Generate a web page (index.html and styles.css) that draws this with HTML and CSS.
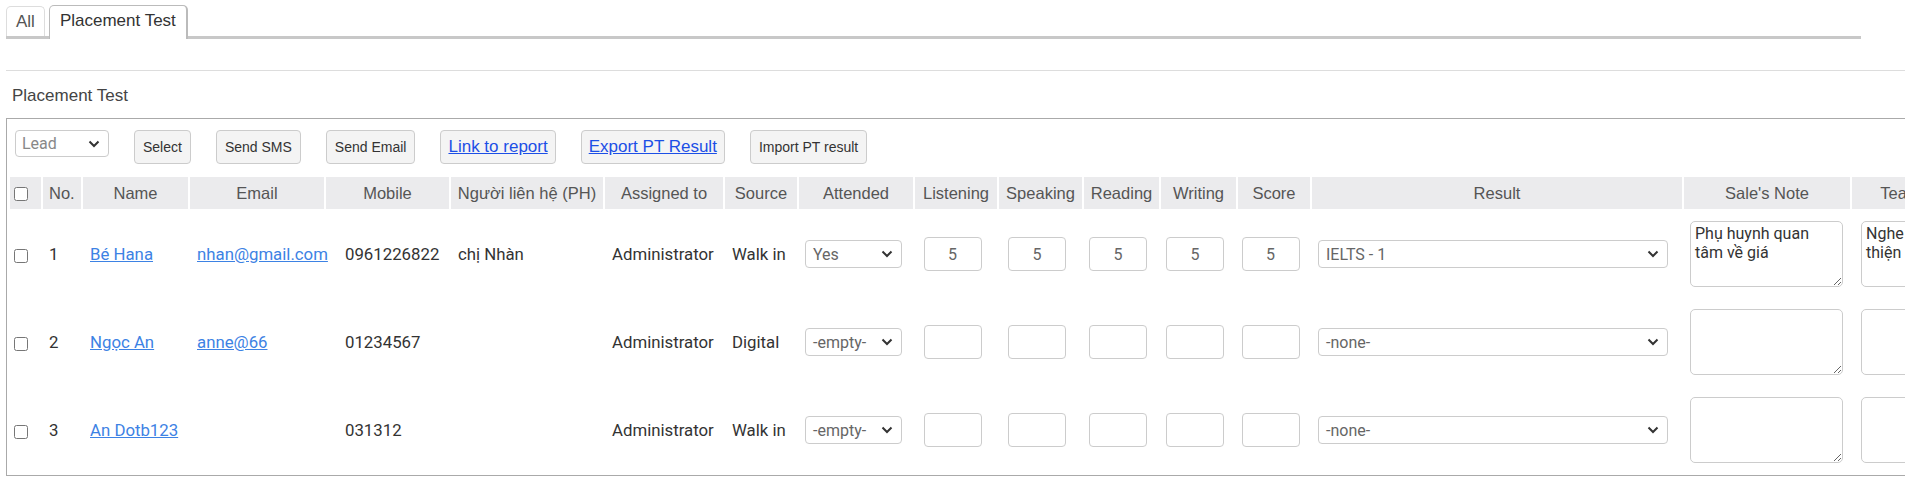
FILE: index.html
```html
<!DOCTYPE html>
<html>
<head>
<meta charset="utf-8">
<link rel="stylesheet" href="styles.css">
</head>
<body>
<div class="page">
  <div class="tabs">
    <div class="tab">All</div>
    <div class="tab active">Placement Test</div>
  </div>
  <div class="divider"></div>
  <div class="section-title">Placement Test</div>
  <div class="panel">
    <div class="toolbar">
      <div class="select lead"><span>Lead</span><svg class="chev" width="12" height="8" viewBox="0 0 12 8"><path d="M1.5 1.5 L6 6 L10.5 1.5" fill="none" stroke="#333" stroke-width="2"/></svg></div>
      <button class="btn">Select</button>
      <button class="btn">Send SMS</button>
      <button class="btn">Send Email</button>
      <button class="btn link"><a>Link to report</a></button>
      <button class="btn link"><a>Export PT Result</a></button>
      <button class="btn">Import PT result</button>
    </div>
    <table class="grid">
      <colgroup>
        <col class="c-cb"><col class="c-no"><col class="c-name"><col class="c-email"><col class="c-mobile"><col class="c-ph"><col class="c-assign"><col class="c-source"><col class="c-att"><col class="c-lis"><col class="c-spk"><col class="c-read"><col class="c-wri"><col class="c-score"><col class="c-result"><col class="c-note"><col class="c-tnote">
      </colgroup>
      <thead>
        <tr>
          <th class="th-cb"><input type="checkbox"></th>
          <th>No.</th>
          <th>Name</th>
          <th>Email</th>
          <th>Mobile</th>
          <th>Người liên hệ (PH)</th>
          <th>Assigned to</th>
          <th>Source</th>
          <th>Attended</th>
          <th>Listening</th>
          <th>Speaking</th>
          <th>Reading</th>
          <th>Writing</th>
          <th>Score</th>
          <th>Result</th>
          <th>Sale's Note</th>
          <th>Teacher's Note</th>
        </tr>
      </thead>
      <tbody>
        <tr>
          <td class="cb"><input type="checkbox"></td>
          <td class="no">1</td>
          <td class="txt"><a href="#">Bé Hana</a></td>
          <td class="txt"><a href="#">nhan@gmail.com</a></td>
          <td class="txt mob">0961226822</td>
          <td class="txt">chị Nhàn</td>
          <td class="txt">Administrator</td>
          <td class="txt">Walk in</td>
          <td class="ctl"><div class="select att"><span>Yes</span><svg class="chev" width="12" height="8" viewBox="0 0 12 8"><path d="M1.5 1.5 L6 6 L10.5 1.5" fill="none" stroke="#333" stroke-width="2"/></svg></div></td>
          <td class="num"><input class="score" type="text" value="5"></td>
          <td class="num"><input class="score" type="text" value="5"></td>
          <td class="num"><input class="score" type="text" value="5"></td>
          <td class="num"><input class="score" type="text" value="5"></td>
          <td class="num"><input class="score" type="text" value="5"></td>
          <td class="ctl"><div class="select res"><span>IELTS - 1</span><svg class="chev" width="12" height="8" viewBox="0 0 12 8"><path d="M1.5 1.5 L6 6 L10.5 1.5" fill="none" stroke="#333" stroke-width="2"/></svg></div></td>
          <td class="ctl"><textarea class="note">Phụ huynh quan tâm về giá</textarea></td>
          <td class="ctl tn"><textarea class="note">Nghe tốt, cần cải thiện ngữ pháp</textarea></td>
        </tr>
        <tr>
          <td class="cb"><input type="checkbox"></td>
          <td class="no">2</td>
          <td class="txt"><a href="#">Ngọc An</a></td>
          <td class="txt"><a href="#">anne@66</a></td>
          <td class="txt mob">01234567</td>
          <td class="txt"></td>
          <td class="txt">Administrator</td>
          <td class="txt">Digital</td>
          <td class="ctl"><div class="select att"><span>-empty-</span><svg class="chev" width="12" height="8" viewBox="0 0 12 8"><path d="M1.5 1.5 L6 6 L10.5 1.5" fill="none" stroke="#333" stroke-width="2"/></svg></div></td>
          <td class="num"><input class="score" type="text" value=""></td>
          <td class="num"><input class="score" type="text" value=""></td>
          <td class="num"><input class="score" type="text" value=""></td>
          <td class="num"><input class="score" type="text" value=""></td>
          <td class="num"><input class="score" type="text" value=""></td>
          <td class="ctl"><div class="select res"><span>-none-</span><svg class="chev" width="12" height="8" viewBox="0 0 12 8"><path d="M1.5 1.5 L6 6 L10.5 1.5" fill="none" stroke="#333" stroke-width="2"/></svg></div></td>
          <td class="ctl"><textarea class="note"></textarea></td>
          <td class="ctl tn"><textarea class="note"></textarea></td>
        </tr>
        <tr>
          <td class="cb"><input type="checkbox"></td>
          <td class="no">3</td>
          <td class="txt"><a href="#">An Dotb123</a></td>
          <td class="txt"></td>
          <td class="txt mob">031312</td>
          <td class="txt"></td>
          <td class="txt">Administrator</td>
          <td class="txt">Walk in</td>
          <td class="ctl"><div class="select att"><span>-empty-</span><svg class="chev" width="12" height="8" viewBox="0 0 12 8"><path d="M1.5 1.5 L6 6 L10.5 1.5" fill="none" stroke="#333" stroke-width="2"/></svg></div></td>
          <td class="num"><input class="score" type="text" value=""></td>
          <td class="num"><input class="score" type="text" value=""></td>
          <td class="num"><input class="score" type="text" value=""></td>
          <td class="num"><input class="score" type="text" value=""></td>
          <td class="num"><input class="score" type="text" value=""></td>
          <td class="ctl"><div class="select res"><span>-none-</span><svg class="chev" width="12" height="8" viewBox="0 0 12 8"><path d="M1.5 1.5 L6 6 L10.5 1.5" fill="none" stroke="#333" stroke-width="2"/></svg></div></td>
          <td class="ctl"><textarea class="note"></textarea></td>
          <td class="ctl tn"><textarea class="note"></textarea></td>
        </tr>
      </tbody>
    </table>
  </div>
</div>
</body>
</html>
```

FILE: styles.css
```css
* { box-sizing: border-box; }
html, body { margin: 0; padding: 0; background: #fff; overflow: hidden; }
body { font-family: "Liberation Sans", Arial, sans-serif; color: #333; }

.page { padding: 5px 0 0 6px; width: 2120px; }

/* tabs */
.tabs {
  display: flex;
  align-items: flex-end;
  gap: 4px;
  width: 1855px;
  height: 34px;
  border-bottom: 3px solid #c8c8c8;
}
.tab {
  height: 30px;
  padding: 0 9px;
  display: flex;
  align-items: center;
  font-size: 17px;
  color: #555;
  border: 1px solid #ddd;
  border-bottom: 0;
  border-radius: 5px 5px 0 0;
  background: #fff;
}
.tab.active {
  height: 34px;
  margin-bottom: -3px;
  padding: 0 10px 3px;
  color: #333;
  border-color: #bbb;
  border-width: 1px 2px 0 1px;
}

.divider { margin-top: 31px; height: 1px; background: #ddd; width: 1905px; }

.section-title {
  margin: 15px 0 0 6px;
  font-size: 17px;
  line-height: 19px;
  color: #444;
}

/* panel */
.panel {
  margin-top: 13px;
  border: 1px solid #aaa;
  border-right: 0;
  padding: 11px 0 0 1px;
  width: 2100px;
}
.toolbar {
  display: flex;
  align-items: flex-start;
  gap: 25px;
  margin-left: 7px;
  height: 34px;
}
.btn {
  height: 34px;
  padding: 0 8px;
  border: 1px solid #ccc;
  border-radius: 4px;
  background: #f4f4f4;
  font-family: "Liberation Sans", Arial, sans-serif;
  font-size: 14px;
  color: #333;
  display: flex;
  align-items: center;
}
.btn.link { font-size: 17px; padding: 0 7px; }
.btn.link a { color: #1c4fe6; text-decoration: underline; }

.select {
  display: flex;
  align-items: center;
  justify-content: space-between;
  height: 28px;
  border: 1px solid #ccc;
  border-radius: 4px;
  background: #fff;
  padding: 0 8px 0 7px;
  font-family: Roboto, "Liberation Sans", sans-serif;
  font-size: 16px;
  color: #666;
}
.select.lead { width: 94px; height: 27px; color: #888; padding-left: 6px; }
.select.att { width: 97px; padding-left: 7px; }
.select.res { width: 350px; }
.chev { flex: none; }

/* table */
.grid {
  margin-top: 11px;
  table-layout: fixed;
  width: 2012px;
  border-collapse: separate;
  border-spacing: 2px;
}
.c-cb { width: 31px; }
.c-no { width: 38px; }
.c-name { width: 105px; }
.c-email { width: 134px; }
.c-mobile { width: 123px; }
.c-ph { width: 152px; }
.c-assign { width: 118px; }
.c-source { width: 72px; }
.c-att { width: 114px; }
.c-lis { width: 82px; }
.c-spk { width: 83px; }
.c-read { width: 75px; }
.c-wri { width: 75px; }
.c-score { width: 72px; }
.c-result { width: 370px; }
.c-note { width: 166px; }
.c-tnote { width: 166px; }

.grid th {
  height: 32px;
  padding: 0;
  background: #ebebed;
  font-weight: normal;
  font-size: 16.5px;
  color: #555;
  text-align: center;
  white-space: nowrap;
  overflow: hidden;
}
.grid th.th-cb { text-align: left; padding-left: 4px; }
.grid th:nth-child(2) { text-align: left; padding-left: 6px; }
.grid td {
  height: 86px;
  padding: 0;
  font-family: Roboto, "Liberation Sans", sans-serif;
  font-size: 16.8px;
  color: #333;
  vertical-align: middle;
  white-space: nowrap;
}
input[type="checkbox"] { margin: 0 0 0 4px; width: 14px; height: 14px; vertical-align: middle; }
.grid th input[type="checkbox"] { margin-left: 0; }
.grid td.no { padding-left: 6px; }
.grid td.txt { padding-left: 7px; }
.grid td.mob { padding-left: 19px; }
.grid td a { color: #3d82e4; text-decoration: underline; }
.grid td.ctl { padding-left: 6px; }
.grid td.tn { padding-left: 9px; }
.grid td.num { text-align: center; padding-right: 7px; }

.score {
  width: 58px;
  height: 34px;
  border: 1px solid #ccc;
  border-radius: 4px;
  text-align: center;
  font-family: Roboto, "Liberation Sans", sans-serif;
  font-size: 16px;
  color: #666;
  padding: 0;
  background: #fff;
}
.note {
  display: block;
  width: 153px;
  height: 66px;
  border: 1px solid #ccc;
  border-radius: 5px;
  padding: 2px 4px;
  font-family: Roboto, "Liberation Sans", sans-serif;
  font-size: 16px;
  line-height: 19px;
  color: #333;
  resize: both;
  overflow: hidden;
  background: #fff;
}
```
